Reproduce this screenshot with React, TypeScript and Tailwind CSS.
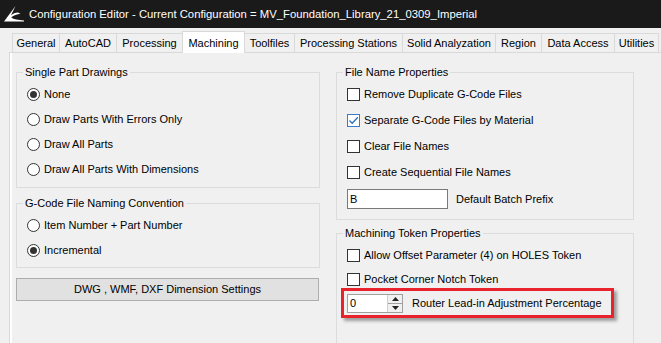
import React from 'react'

const tabs = [
  { label: 'General', w: 48 },
  { label: 'AutoCAD', w: 57 },
  { label: 'Processing', w: 66 },
  { label: 'Machining', w: 62, active: true },
  { label: 'Toolfiles', w: 50 },
  { label: 'Processing Stations', w: 108 },
  { label: 'Solid Analyzation', w: 93 },
  { label: 'Region', w: 46 },
  { label: 'Data Access', w: 73 },
  { label: 'Utilities', w: 44 },
]

function Logo() {
  return (
    <svg width="22" height="18" viewBox="0 0 22 18" className="shrink-0">
      <path
        d="M12.5 1 L1 16.5 L21 16.5 L21 15.6 C15 15.2 10.5 14.3 8.2 12.6 C10.6 10.4 14 9.2 17.5 8.8 L15 7.6 C12.5 7.8 9.8 8.8 8 10.2 Z"
        fill="#ffffff"
      />
    </svg>
  )
}

function GroupBox({ title, children, className = '' }: { title: string; children: React.ReactNode; className?: string }) {
  return (
    <fieldset className={`border border-[#dcdcdc] ${className}`}>
      <legend className="ml-[6px] px-[2px] text-[11px] leading-[15px] text-black">{title}</legend>
      {children}
    </fieldset>
  )
}

function Radio({ checked, label }: { checked?: boolean; label: string }) {
  return (
    <div className="flex h-[25px] items-center pl-[10px]">
      <span className="flex h-[13px] w-[13px] items-center justify-center rounded-full border border-[#333333] bg-white">
        {checked && <span className="h-[7px] w-[7px] rounded-full bg-[#333333]" />}
      </span>
      <span className="ml-[4px] text-[11px] text-black">{label}</span>
    </div>
  )
}

function Checkbox({ checked, label, h = 'h-[26px]' }: { checked?: boolean; label: string; h?: string }) {
  return (
    <div className={`flex ${h} items-center pl-[10px]`}>
      <span
        className={`flex h-[13px] w-[13px] items-center justify-center border bg-white ${
          checked ? 'border-[#3a7bc8]' : 'border-[#333333]'
        }`}
      >
        {checked && (
          <svg width="11" height="11" viewBox="0 0 11 11">
            <path d="M1.5 5.5 L4.2 8.2 L9.8 2.2" fill="none" stroke="#2a6fc2" strokeWidth="1.3" />
          </svg>
        )}
      </span>
      <span className="ml-[4px] text-[11px] text-black">{label}</span>
    </div>
  )
}

function Spinner() {
  return (
    <div className="flex h-[19px] w-[56px] border border-[#a0a0a0] bg-white">
      <div className="flex flex-1 items-center pl-[2px] text-[11px] text-black">0</div>
      <div className="flex w-[15px] flex-col border-l border-[#d0d0d0] bg-[#f0f0f0]">
        <div className="flex flex-1 items-center justify-center border-b border-[#a0a0a0]">
          <svg width="7" height="4" viewBox="0 0 7 4">
            <path d="M0 4 L3.5 0 L7 4 Z" fill="#222" />
          </svg>
        </div>
        <div className="flex flex-1 items-center justify-center">
          <svg width="7" height="4" viewBox="0 0 7 4">
            <path d="M0 0 L3.5 4 L7 0 Z" fill="#222" />
          </svg>
        </div>
      </div>
    </div>
  )
}

export default function App() {
  return (
    <div className="h-[343px] w-[661px] overflow-hidden bg-[#f0f0f0] font-['Liberation_Sans',Arial,sans-serif]">
      {/* Title bar */}
      <div className="flex h-[28px] items-center gap-[4px] bg-[#1a1a1a] pl-[3px]">
        <Logo />
        <span className="text-[11.3px] text-white">
          Configuration Editor - Current Configuration = MV_Foundation_Library_21_0309_Imperial
        </span>
      </div>

      {/* Tabs */}
      <div className="mt-[3px] flex h-[21px] items-end pl-[12px]">
        {tabs.map((t, i) =>
          t.active ? (
            <div
              key={t.label}
              style={{ width: t.w + 1 }}
              className="relative z-10 -mb-px -ml-px flex h-[22px] shrink-0 items-start justify-center border border-b-0 border-[#d9d9d9] bg-white pt-[3px] text-[11px] text-black"
            >
              {t.label}
            </div>
          ) : (
            <div
              key={t.label}
              style={{ width: t.w }}
              className={`flex h-[19px] shrink-0 items-center justify-center border-r border-t border-[#d9d9d9] bg-[#f0f0f0] text-[11px] text-black ${
                i === 0 ? 'border-l' : ''
              }`}
            >
              {t.label}
            </div>
          )
        )}
      </div>

      {/* Tab page */}
      <div className="ml-[9px] h-[300px] border-l border-t border-[#d9d9d9]">
        <div className="h-full border-l-2 border-white pl-[4px] pt-[12px]">
          <div className="flex gap-[16px]">
            {/* Left column */}
            <div className="flex w-[304px] flex-col">
              <GroupBox title="Single Part Drawings" className="pb-[5px]">
                <div className="pt-[2px]">
                  <Radio checked label="None" />
                  <Radio label="Draw Parts With Errors Only" />
                  <Radio label="Draw All Parts" />
                  <Radio label="Draw All Parts With Dimensions" />
                </div>
              </GroupBox>

              <GroupBox title="G-Code File Naming Convention" className="mt-[8px] pb-[4px]">
                <div className="pt-[2px]">
                  <Radio label="Item Number + Part Number" />
                  <Radio checked label="Incremental" />
                </div>
              </GroupBox>

              <button className="mt-[10px] h-[23px] w-[303px] border border-[#adadad] bg-[#e1e1e1] text-[11px] text-black">
                DWG , WMF, DXF Dimension Settings
              </button>
            </div>

            {/* Right column */}
            <div className="flex w-[298px] flex-col">
              <GroupBox title="File Name Properties" className="pb-[6px]">
                <div className="pt-px">
                  <Checkbox label="Remove Duplicate G-Code Files" />
                  <Checkbox checked label="Separate G-Code Files by Material" />
                  <Checkbox label="Clear File Names" />
                  <Checkbox label="Create Sequential File Names" />
                  <div className="flex h-[28px] items-center pl-[10px]">
                    <div className="flex h-[20px] w-[101px] items-center border border-[#7a7a7a] bg-white pl-[2px] text-[11px] text-black">
                      B
                    </div>
                    <span className="ml-[8px] text-[11px] text-black">Default Batch Prefix</span>
                  </div>
                </div>
              </GroupBox>

              <GroupBox title="Machining Token Properties" className="mt-[6px] h-[140px]">
                <div className="pt-[2px]">
                  <Checkbox h="h-[24px]" label="Allow Offset Parameter (4) on HOLES Token" />
                  <Checkbox h="h-[24px]" label="Pocket Corner Notch Token" />
                  <div className="-mt-[3px] ml-[4px] flex h-[30px] w-[273px] items-center border-[3px] border-[#e8232b] pl-[3px] shadow-[3px_3px_3px_rgba(0,0,0,0.35)]">
                    <Spinner />
                    <span className="ml-[9px] text-[11px] text-black">Router Lead-in Adjustment Percentage</span>
                  </div>
                </div>
              </GroupBox>
            </div>
          </div>
        </div>
      </div>
    </div>
  )
}
